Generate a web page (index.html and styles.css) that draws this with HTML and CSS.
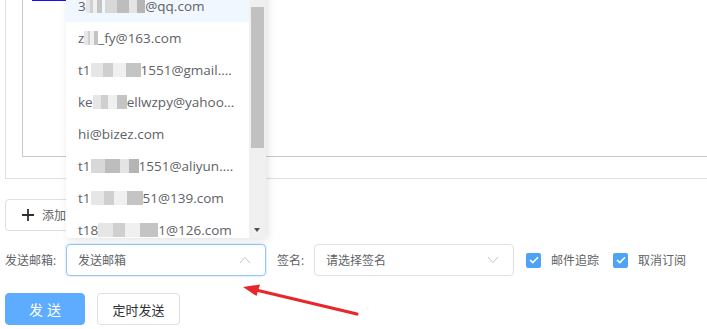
FILE: index.html
```html
<!DOCTYPE html>
<html lang="zh-CN">
<head>
  <meta charset="UTF-8">
  <title>写邮件</title>
  <link rel="stylesheet" href="styles.css">
</head>
<body>
  <div class="page">
    <div class="editor">
      <div class="editor-inner">
        <div class="link-line"></div>
      </div>
    </div>

    <button class="btn btn-add">
      <svg class="plus" width="12" height="12" viewBox="0 0 12 12"><path d="M6 0v12M0 6h12" stroke="#303133" stroke-width="1.8"/></svg>
      添加
    </button>

    <div class="form-row">
      <span class="label">发送邮箱:</span>
      <div class="select is-focus">
        <span class="select-text">发送邮箱</span>
        <svg class="caret" width="12" height="8" viewBox="0 0 12 8"><path d="M1 7l5-5.5 5 5.5" fill="none" stroke="#c0c4cc" stroke-width="1"/></svg>
      </div>
      <span class="label label-sign">签名:</span>
      <div class="select">
        <span class="select-text">请选择签名</span>
        <svg class="caret" width="12" height="8" viewBox="0 0 12 8"><path d="M1 1l5 5.5 5-5.5" fill="none" stroke="#c0c4cc" stroke-width="1"/></svg>
      </div>
      <label class="check">
        <span class="check-box"><svg width="10" height="8" viewBox="0 0 10 8"><path d="M1 4l2.8 2.6L9 1.2" fill="none" stroke="#fff" stroke-width="1.6"/></svg></span>
        邮件追踪
      </label>
      <label class="check">
        <span class="check-box"><svg width="10" height="8" viewBox="0 0 10 8"><path d="M1 4l2.8 2.6L9 1.2" fill="none" stroke="#fff" stroke-width="1.6"/></svg></span>
        取消订阅
      </label>
    </div>

    <div class="actions">
      <button class="btn btn-primary">发送</button>
      <button class="btn btn-timer">定时发送</button>
    </div>

    <!-- 下拉框 -->
    <div class="dropdown">
      <ul class="options">
        <li class="hover">3<span class="bl w16"></span> <span class="bl w40 dark"></span>@qq.com</li>
        <li>z<span class="bl w14"></span>_fy@163.com</li>
        <li>t1<span class="bl w50"></span>1551@gmail.com</li>
        <li>ke<span class="bl w34"></span>ellwzpy@yahoo.com</li>
        <li>hi@bizez.com</li>
        <li>t1<span class="bl w48 dark"></span>1551@aliyun.com</li>
        <li>t1<span class="bl w52"></span>51@139.com</li>
        <li>t18<span class="bl w60"></span>1@126.com</li>
      </ul>
      <div class="scrollbar">
        <span class="sb-up"></span>
        <span class="sb-thumb"></span>
        <span class="sb-down"></span>
      </div>
    </div>

    <svg class="arrow" width="707" height="329" viewBox="0 0 707 329">
      <path d="M357 314L256 290" stroke="#e8262b" stroke-width="3.2" stroke-linecap="round"/>
      <path d="M243 287L260 284.5L256.5 296z" fill="#e8262b"/>
    </svg>
  </div>
</body>
</html>
```

FILE: styles.css
```css
* {
  margin: 0;
  padding: 0;
  box-sizing: border-box;
}

body {
  width: 707px;
  height: 329px;
  overflow: hidden;
  background: #fff;
  font-family: "Open Sans", "Noto Sans CJK SC", sans-serif;
  font-size: 12px;
  color: #606266;
}

.page {
  display: flow-root;
  position: relative;
  padding-left: 5px;
  height: 329px;
}

.editor {
  width: 760px;
  height: 189px;
  margin-top: -10px;
  padding: 0 0 21px 16px;
  border: 1px solid #dcdfe6;
}

.editor-inner {
  height: 166px;
  border: 1px solid #c8c9cc;
  padding: 8px 0 0 9px;
}

.link-line {
  width: 34px;
  height: 1px;
  background: #1a0dff;
}

.btn {
  display: inline-flex;
  align-items: center;
  justify-content: center;
  height: 32px;
  border: 1px solid #dcdfe6;
  border-radius: 4px;
  background: #fff;
  color: #303133;
  font-family: inherit;
  font-size: 13px;
}

.btn-add {
  margin-top: 20px;
  padding: 0 20px 0 16px;
  color: #606266;
  font-size: 12px;
}

.btn-add .plus {
  margin-right: 8px;
}

.form-row {
  display: flex;
  align-items: center;
  height: 32px;
  margin-top: 13px;
}

.label {
  width: 61px;
  white-space: nowrap;
  color: #606266;
}

.label-sign {
  width: 37px;
  margin-left: 11px;
}

.select {
  display: flex;
  align-items: center;
  justify-content: space-between;
  width: 200px;
  height: 32px;
  padding: 0 14px 0 11px;
  border: 1px solid #dcdfe6;
  border-radius: 4px;
  color: #606266;
}

.select.is-focus {
  border-color: #95c6f8;
  box-shadow: 0 0 2px rgba(64, 158, 255, 0.45);
}

.check {
  display: flex;
  align-items: center;
  margin-left: 12px;
  white-space: nowrap;
  color: #606266;
}

.check + .check {
  margin-left: 14px;
}

.check-box {
  display: flex;
  align-items: center;
  justify-content: center;
  width: 15px;
  height: 15px;
  margin-right: 10px;
  border-radius: 2px;
  background: #4fa3f7;
}

.actions {
  display: flex;
  gap: 12px;
  margin-top: 17px;
}

.btn-primary {
  width: 80px;
  border-color: #5eacff;
  background: #5eacff;
  color: #fff;
  font-size: 14px;
  letter-spacing: 4px;
  padding-left: 4px;
}

.btn-timer {
  width: 83px;
}

.dropdown {
  position: absolute;
  left: 66px;
  top: -20px;
  width: 200px;
  height: 258px;
  overflow: hidden;
  background: #fff;
  box-shadow: 2px 2px 8px rgba(0, 0, 0, 0.12);
  border-radius: 0 0 4px 4px;
}

.options {
  list-style: none;
  margin-top: 10px;
  padding-right: 17px;
}

.options li {
  height: 32px;
  line-height: 32px;
  padding: 0 12px;
  white-space: nowrap;
  overflow: hidden;
  text-overflow: ellipsis;
  font-size: 13.5px;
  color: #606266;
}

.options li.hover {
  background: #f1f7fe;
}

.bl {
  display: inline-block;
  height: 14px;
  vertical-align: -2px;
  background: linear-gradient(90deg, #e6e6e6 0 25%, #cfcfcf 25% 45%, #f0f0f0 45% 70%, #c4c4c4 70%);
}

.bl.dark {
  background: linear-gradient(90deg, #d8d8d8 0 30%, #bdbdbd 30% 60%, #e4e4e4 60% 80%, #b5b5b5 80%);
}

.w14 { width: 14px; }
.w16 { width: 16px; }
.w34 { width: 34px; }
.w40 { width: 40px; }
.w48 { width: 48px; }
.w50 { width: 50px; }
.w52 { width: 52px; }
.w60 { width: 60px; }

.scrollbar {
  position: absolute;
  right: 0;
  top: 0;
  width: 17px;
  height: 100%;
  background: #f0f0f0;
}

.sb-up,
.sb-down {
  position: absolute;
  left: 5px;
  width: 0;
  height: 0;
  border-left: 3.5px solid transparent;
  border-right: 3.5px solid transparent;
}

.sb-up {
  top: 16px;
  border-bottom: 4px solid #a3a3a3;
}

.sb-down {
  top: 248px;
  border-top: 4px solid #505050;
}

.sb-thumb {
  position: absolute;
  left: 2px;
  top: 27px;
  width: 13px;
  height: 141px;
  background: #c1c1c1;
}

.arrow {
  position: absolute;
  left: 0;
  top: 0;
  pointer-events: none;
}
```
